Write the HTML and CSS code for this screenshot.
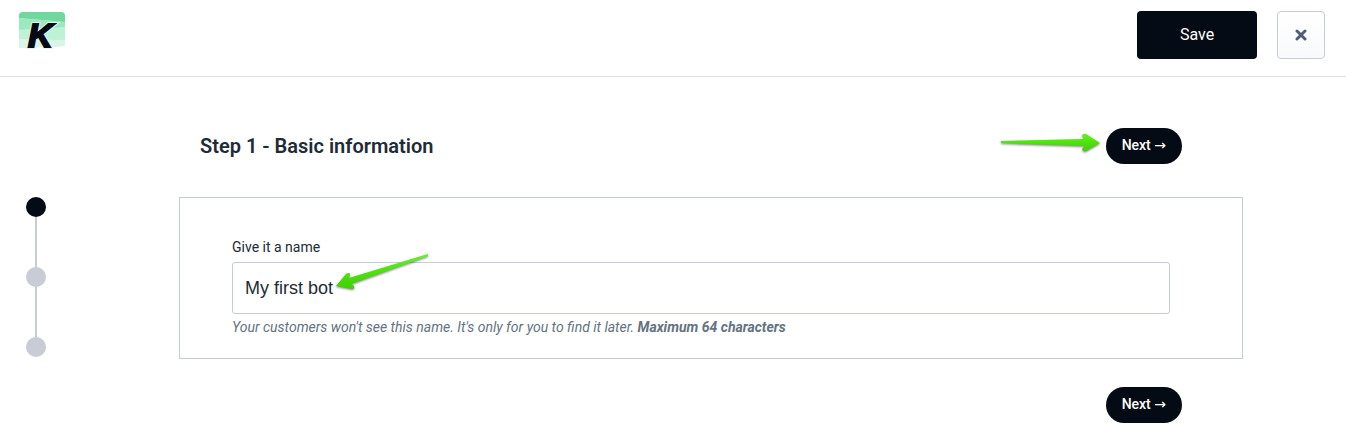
FILE: index.html
```html
<!DOCTYPE html>
<html lang="en">
<head>
  <meta charset="UTF-8" />
  <meta name="viewport" content="width=device-width, initial-scale=1.0">
  <title>Step 1 - Basic information</title>
  <link rel="stylesheet" href="styles.css">
</head>
<body>

  <header class="topbar">
    <a class="logo" href="#" aria-label="Home">
      <svg width="60" height="48" viewBox="0 0 60 48">
        <path d="M0 4Q0 0 4 0H42Q46 0 46 4V34L0 36Z" fill="#bff2d8"/>
        <path d="M0 4Q0 0 4 0H42Q46 0 46 4V10L0 6Z" fill="#70d89e"/>
        <path d="M0 6L46 10V16L0 18Z" fill="#9ee8c0"/>
        <path d="M0 18L46 15V28L0 27Z" fill="#bdf2d7"/>
        <path d="M0 27L46 28V34L0 36Z" fill="#daf4e7"/>
        <text class="logo-letter logo-edge" x="9" y="35">K</text>
        <text class="logo-letter" x="9" y="35">K</text>
      </svg>
    </a>
    <div class="topbar-actions">
      <button type="submit" form="botForm" class="btn-save">Save</button>
      <button type="button" class="btn-close" aria-label="Close">
        <svg width="12" height="12" viewBox="0 0 12 12">
          <path d="M2 2L10 10M10 2L2 10" stroke="#4f5d78" stroke-width="3" stroke-linecap="round"/>
        </svg>
      </button>
    </div>
  </header>

  <main class="wizard">
    <ol class="steps">
      <li class="step active" aria-label="Step 1"></li>
      <li class="step" aria-label="Step 2"></li>
      <li class="step" aria-label="Step 3"></li>
    </ol>

    <form id="botForm" class="content">
      <div class="row">
        <h2>Step 1 - Basic information</h2>
        <div class="next-wrap">
          <button type="button" class="btn-next">Next <span class="arrow">→</span></button>
          <svg class="hint hint-next" width="102" height="22" viewBox="0 0 102 22">
            <defs>
              <linearGradient id="green" x1="0" y1="0" x2="0" y2="1">
                <stop offset="0" stop-color="#5cf51a"/>
                <stop offset="1" stop-color="#3fd000"/>
              </linearGradient>
            </defs>
            <path fill="url(#green)" d="M1 8L85 6L82 3Q83 0 86 1L100 10L86 18Q83 19 82 16L85 13L1 10Z"/>
          </svg>
        </div>
      </div>

      <div class="card">
        <label for="name">Give it a name</label>
        <div class="field">
          <input type="text" id="name" maxlength="64" value="My first bot">
          <svg class="hint hint-name" width="96" height="42" viewBox="0 0 96 42">
            <path fill="url(#green)" d="M92 2L13 26L14 22Q13 20 10 22L0 34L16 37Q19 37 18 34L15 32L92 4Z"/>
          </svg>
        </div>
        <p class="help">Your customers won't see this name. It's only for you to find it later. <b>Maximum 64 characters</b></p>
      </div>

      <div class="row row-end">
        <button type="button" class="btn-next">Next <span class="arrow">→</span></button>
      </div>
    </form>
  </main>

</body>
</html>
```
FILE: styles.css
```css
* {
  box-sizing: border-box;
}

body {
  margin: 0;
  font-family: Roboto, sans-serif;
  font-size: 14px;
  color: #212b36;
  background: #fff;
}

button {
  font-family: inherit;
  cursor: pointer;
}

.topbar {
  display: flex;
  justify-content: space-between;
  align-items: flex-start;
  height: 77px;
  padding: 11px 21px 0 19px;
  border-bottom: 1px solid #dfe3e8;
}

.logo svg {
  display: block;
  margin-top: 1px;
}

.logo-letter {
  font-family: "Liberation Sans", Arial, sans-serif;
  font-size: 34px;
  font-weight: bold;
  font-style: italic;
  fill: #050b14;
  stroke: #050b14;
  stroke-width: 2px;
}

.logo-edge {
  stroke: #e6f5ee;
  stroke-width: 4px;
}

.topbar-actions {
  display: flex;
  gap: 20px;
}

.btn-save {
  width: 120px;
  height: 48px;
  padding: 0 0 2px;
  font-size: 16px;
  font-weight: 400;
  color: #fff;
  background: #050b14;
  border: none;
  border-radius: 4px;
}

.btn-close {
  display: flex;
  justify-content: center;
  align-items: center;
  width: 48px;
  height: 48px;
  padding: 0;
  background: linear-gradient(#fff, #f9fafb);
  border: 1px solid #c4cdd9;
  border-radius: 4px;
}

.wizard {
  display: flex;
  padding: 51px 103px 20px 26px;
}

.steps {
  width: 20px;
  margin: 69px 133px 0 0;
  padding: 0;
  list-style: none;
}

.step {
  width: 20px;
  height: 20px;
  border-radius: 50%;
  background: #c8ccd5;
}

.step.active {
  background: #050b14;
}

/* line between the dots */
.step + .step {
  position: relative;
  margin-top: 50px;
}

.step + .step::before {
  content: "";
  position: absolute;
  left: 9px;
  bottom: 20px;
  width: 2px;
  height: 50px;
  background: #c8ccd5;
}

.content {
  flex: 1;
}

.row {
  display: flex;
  justify-content: space-between;
  align-items: center;
  padding: 0 61px 0 21px;
}

.row-end {
  justify-content: flex-end;
}

h2 {
  margin: 0;
  font-size: 20px;
  font-weight: 600;
  line-height: 28px;
}

.btn-next {
  display: block;
  height: 36px;
  padding: 0 16px 2px;
  font-size: 14px;
  font-weight: 500;
  color: #fff;
  background: #050b14;
  border: none;
  border-radius: 18px;
}

.arrow {
  font-family: "DejaVu Sans", sans-serif;
  font-weight: 400;
  line-height: 1;
}

.card {
  margin: 33px 0 28px;
  padding: 39px 72px 21px 52px;
  border: 1px solid #c4cdd5;
}

label {
  display: block;
  margin-bottom: 5px;
  line-height: 20px;
}

.next-wrap, .field {
  position: relative;
}

input {
  display: block;
  width: 100%;
  height: 52px;
  padding: 0 12px;
  font-family: "Liberation Sans", Arial, sans-serif;
  font-size: 18px;
  color: #212b36;
  background: #fff;
  border: 1px solid #c4cdd9;
  border-radius: 3px;
}

.help {
  margin: 3px 0 0;
  line-height: 20px;
  font-style: italic;
  color: #637381;
}

.hint {
  position: absolute;
  filter: drop-shadow(0 1px 1px #00000080);
  pointer-events: none;
}

.hint-next {
  right: 80px;
  top: 5px;
}

.hint-name {
  left: 104px;
  top: -10px;
}
```
